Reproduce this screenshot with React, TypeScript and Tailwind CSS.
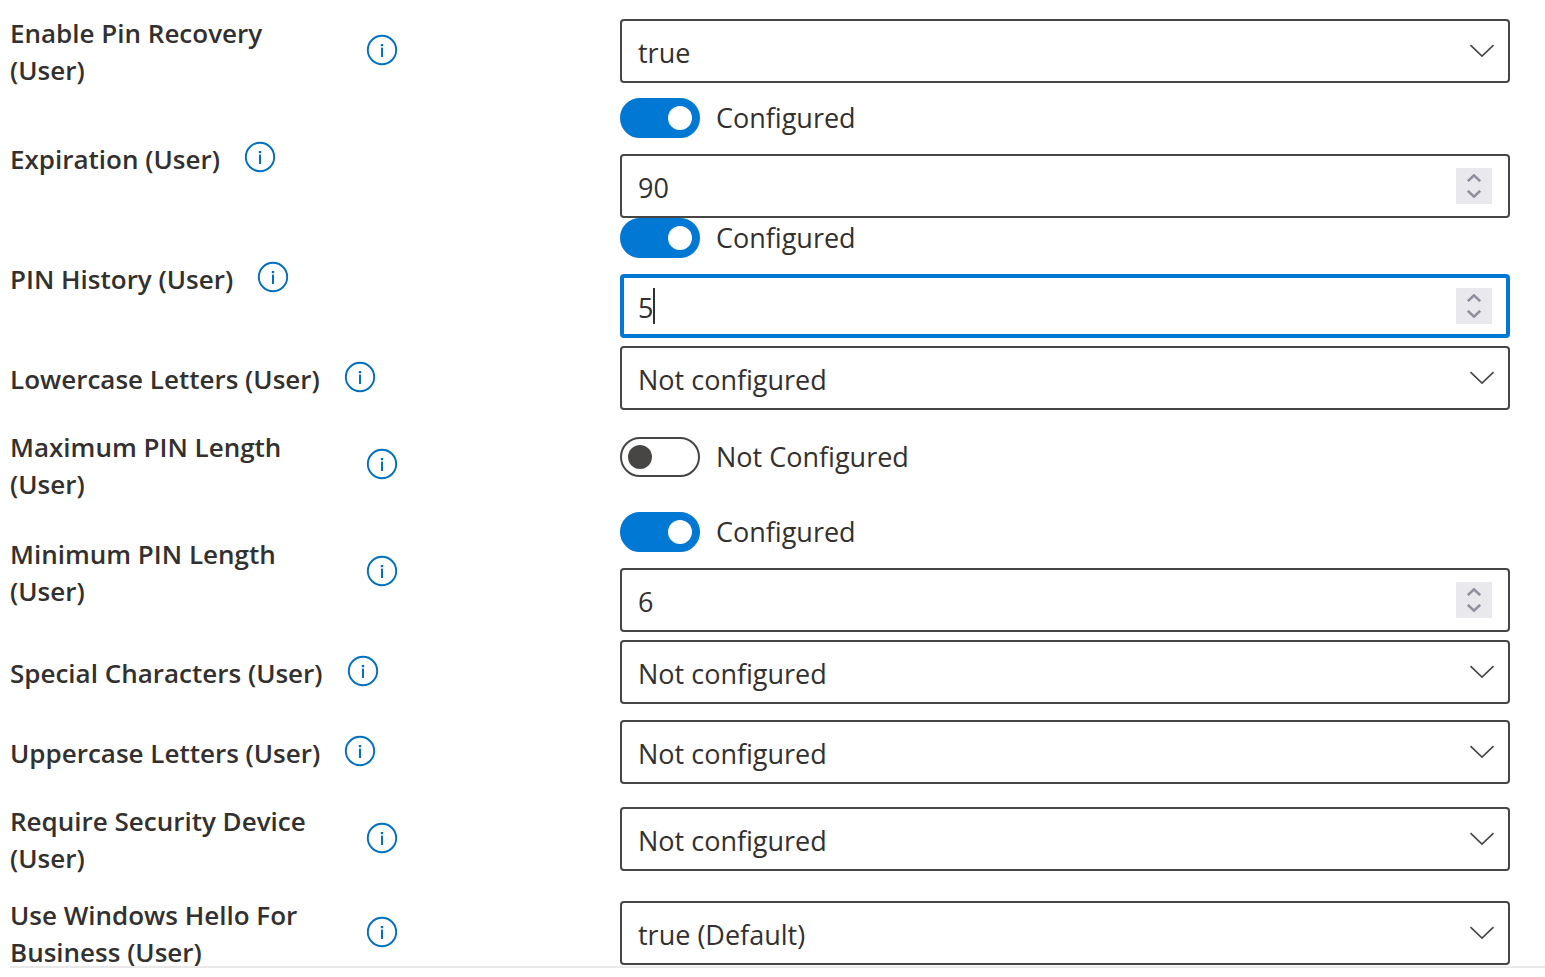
import React from 'react';

interface Setting {
  id: string;
  label: string;
  kind: 'select' | 'number';
  value: string;
  configured?: boolean;
  active?: boolean;
}

const settings: Setting[] = [
  { id: 'pin-recovery', label: 'Enable Pin Recovery (User)', kind: 'select', value: 'true' },
  { id: 'expiration', label: 'Expiration (User)', kind: 'number', value: '90', configured: true },
  { id: 'pin-history', label: 'PIN History (User)', kind: 'number', value: '5', configured: true, active: true },
  { id: 'lowercase', label: 'Lowercase Letters (User)', kind: 'select', value: 'Not configured' },
  { id: 'max-length', label: 'Maximum PIN Length (User)', kind: 'number', value: '', configured: false },
  { id: 'min-length', label: 'Minimum PIN Length (User)', kind: 'number', value: '6', configured: true },
  { id: 'special', label: 'Special Characters (User)', kind: 'select', value: 'Not configured' },
  { id: 'uppercase', label: 'Uppercase Letters (User)', kind: 'select', value: 'Not configured' },
  { id: 'security-device', label: 'Require Security Device (User)', kind: 'select', value: 'Not configured' },
  { id: 'hello', label: 'Use Windows Hello For Business (User)', kind: 'select', value: 'true (Default)' },
];

const InfoIcon = () => (
  <svg width="32" height="32" viewBox="0 0 32 32" fill="none" className="block">
    <circle cx="16" cy="16" r="14.2" stroke="#006fc4" strokeWidth="1.9" />
    <rect x="14.8" y="10" width="2.4" height="2.2" fill="#006fc4" />
    <rect x="15" y="13.6" width="2" height="9.4" fill="#006fc4" />
  </svg>
);

const SelectField: React.FC<{ setting: Setting }> = ({ setting }) => {
  const [value, setValue] = React.useState(setting.value);
  const options = Array.from(new Set([setting.value, 'Not configured', 'true', 'false']));

  return (
    <div className="relative py-2">
      <select
        id={setting.id}
        value={value}
        onChange={(e) => setValue(e.target.value)}
        className="block h-16 w-full appearance-none rounded-sm border-2 border-[#484644] bg-white pl-4 pr-16 pt-1 outline-none"
      >
        {options.map((option) => (
          <option key={option} value={option}>{option}</option>
        ))}
      </select>
      <svg
        width="26"
        height="14"
        viewBox="0 0 26 14"
        fill="none"
        className="pointer-events-none absolute right-[15px] top-1/2 -translate-y-1/2"
      >
        <path d="M1.5 1.2 13 12.2 24.5 1.2" stroke="#484644" strokeWidth="1.6" />
      </svg>
    </div>
  );
};

const NumberField: React.FC<{ setting: Setting }> = ({ setting }) => {
  const [configured, setConfigured] = React.useState(Boolean(setting.configured));
  const [value, setValue] = React.useState(setting.value);
  const step = (delta: number) => setValue(String(Number(value) + delta));

  return (
    <div>
      <div className="mb-4 flex items-center gap-4">
        <button
          type="button"
          role="switch"
          id={`${setting.id}-switch`}
          aria-checked={configured}
          aria-label={setting.label}
          onClick={() => setConfigured(!configured)}
          className={`flex h-10 w-20 items-center rounded-full border-2 px-1.5
            ${configured ? 'justify-end border-[#0078d4] bg-[#0078d4]' : 'justify-start border-[#484644] bg-white'}`}
        >
          <span className={`size-6 rounded-full ${configured ? 'bg-white' : 'bg-[#484644]'}`} />
        </button>
        <label htmlFor={`${setting.id}-switch`} className="leading-10">
          {configured ? 'Configured' : 'Not Configured'}
        </label>
      </div>

      {configured && (
        <div className="relative">
          <input
            id={setting.id}
            type="number"
            value={value}
            onChange={(e) => setValue(e.target.value)}
            className={`block h-16 w-full rounded-sm bg-white pr-16 pt-0.5 outline-none [appearance:textfield]
              ${setting.active ? 'border-4 border-[#0078d4] pl-3.5 caret-transparent' : 'border-2 border-[#484644] pl-4'}`}
          />
          {setting.active && <span className="absolute left-[33px] top-3.5 h-9 w-0.5 bg-[#323130]" />}
          <div className="absolute right-[18px] top-3.5 flex h-9 w-9 flex-col bg-[#e9e9ed]">
            <button type="button" aria-label="Increase" onClick={() => step(1)} className="flex h-1/2 items-end justify-center pb-1">
              <svg width="16" height="8" viewBox="0 0 16 8" fill="none">
                <path d="M1.8 7.2 8 1.4l6.2 5.8" stroke="#8f8f9d" strokeWidth="2.6" />
              </svg>
            </button>
            <button type="button" aria-label="Decrease" onClick={() => step(-1)} className="flex h-1/2 items-start justify-center pt-1">
              <svg width="16" height="8" viewBox="0 0 16 8" fill="none">
                <path d="M1.8.8 8 6.6 14.2.8" stroke="#8f8f9d" strokeWidth="2.6" />
              </svg>
            </button>
          </div>
        </div>
      )}
    </div>
  );
};

const SettingRow: React.FC<{ setting: Setting }> = ({ setting }) => (
  <div className="grid grid-cols-[61fr_89fr] items-center">
    <div className="flex items-center gap-6 pb-[9px] pt-[11px]">
      <label
        htmlFor={setting.kind === 'number' && !setting.configured ? `${setting.id}-switch` : setting.id}
        className="max-w-[332px] text-[26px] font-semibold leading-[37px]"
      >
        {setting.label}
      </label>
      <button type="button" aria-label={`About ${setting.label}`} className="-mt-1 shrink-0">
        <InfoIcon />
      </button>
    </div>
    {setting.kind === 'select' ? <SelectField setting={setting} /> : <NumberField setting={setting} />}
  </div>
);

export default function App() {
  return (
    <div className="flex h-screen flex-col bg-white font-['Open_Sans','Noto_Sans',sans-serif] text-[27px] text-[#323130]">
      <main className="min-h-0 flex-1 overflow-hidden pl-2.5 pr-[35px] pt-1">
        {settings.map((setting) => (
          <SettingRow key={setting.id} setting={setting} />
        ))}
      </main>
      <footer className="ml-2.5 h-[11px] shrink-0 border-t-2 border-[#e8e8e8]" />
    </div>
  );
}
